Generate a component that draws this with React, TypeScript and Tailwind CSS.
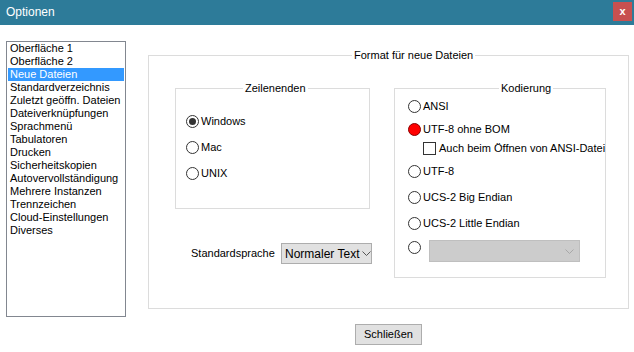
import React from "react";

const items = [
  "Oberfläche 1",
  "Oberfläche 2",
  "Neue Dateien",
  "Standardverzeichnis",
  "Zuletzt geöffn. Dateien",
  "Dateiverknüpfungen",
  "Sprachmenü",
  "Tabulatoren",
  "Drucken",
  "Sicherheitskopien",
  "Autovervollständigung",
  "Mehrere Instanzen",
  "Trennzeichen",
  "Cloud-Einstellungen",
  "Diverses",
];

const Radio = ({ checked = false, red = false }: { checked?: boolean; red?: boolean }) => {
  if (red) {
    return (
      <span className="flex h-[13px] w-[13px] shrink-0 rounded-full border border-[#8a0000] bg-[#ff0000]" />
    );
  }
  return (
    <span className="flex h-[13px] w-[13px] shrink-0 items-center justify-center rounded-full border border-[#333333] bg-white">
      {checked && <span className="h-[7px] w-[7px] rounded-full bg-[#333333]" />}
    </span>
  );
};

const RadioRow = ({ label, checked, red }: { label: string; checked?: boolean; red?: boolean }) => (
  <div className="flex h-[13px] items-center gap-[2px]">
    <Radio checked={checked} red={red} />
    <span className="leading-[13px]">{label}</span>
  </div>
);

const Chevron = ({ color }: { color: string }) => (
  <svg width="9" height="5" viewBox="0 0 9 5" className="shrink-0">
    <path d="M0.5 0.5 L4.5 4.5 L8.5 0.5" fill="none" stroke={color} strokeWidth="1" />
  </svg>
);

const GroupBox = ({
  title,
  titleLeft,
  className,
  children,
}: {
  title: string;
  titleLeft: string;
  className: string;
  children?: React.ReactNode;
}) => (
  <div className={`relative shrink-0 border border-[#dcdcdc] ${className}`}>
    <span className={`absolute -top-[7px] bg-white px-[2px] leading-[13px] ${titleLeft}`}>{title}</span>
    {children}
  </div>
);

export default function App() {
  return (
    <div
      className="flex h-[352px] w-[634px] flex-col bg-white text-[11px] text-black"
      style={{ fontFamily: '"Liberation Sans", Arial, sans-serif' }}
    >
      <div className="flex h-[25px] shrink-0 items-start justify-between bg-[#2d7b99] pl-[6px] pr-[2px]">
        <span className="mt-[5px] text-[12px] leading-[14px] text-white">Optionen</span>
        <button className="mt-[2px] flex h-[19px] w-[19px] items-center justify-center bg-[#c75050] text-[11px] font-bold leading-none text-white">
          x
        </button>
      </div>

      <div className="flex items-start pl-[6px] pt-[16px]">
        <div className="h-[276px] w-[120px] shrink-0 border border-[#828790] px-[1px]">
          {items.map((it) => (
            <div
              key={it}
              className={`h-[13px] whitespace-nowrap pl-[2px] leading-[13px] ${
                it === "Neue Dateien" ? "bg-[#3399ff] text-white" : ""
              }`}
            >
              {it}
            </div>
          ))}
        </div>

        <div className="ml-[22px] mt-[14px] flex flex-col items-center">
          <GroupBox title="Format für neue Dateien" titleLeft="left-[203px]" className="h-[254px] w-[481px]">
            <div className="flex items-start pl-[26px] pt-[32px]">
              <div className="flex flex-col">
                <GroupBox title="Zeilenenden" titleLeft="left-[67px]" className="h-[121px] w-[195px]">
                  <div className="flex flex-col gap-[13px] pl-[10px] pt-[26px]">
                    <RadioRow label="Windows" checked />
                    <RadioRow label="Mac" />
                    <RadioRow label="UNIX" />
                  </div>
                </GroupBox>
                <div className="mt-[34px] flex items-center pl-[16px]">
                  <span className="w-[90px]">Standardsprache</span>
                  <div className="flex h-[21px] w-[91px] items-center justify-between overflow-hidden border border-[#adadad] bg-[#e1e1e1] pl-[3px] pr-[5px]">
                    <span className="whitespace-nowrap text-[12px]">Normaler Text</span>
                    <span className="ml-[1px] flex h-full items-center bg-[#e1e1e1] pl-[2px]">
                      <Chevron color="#555555" />
                    </span>
                  </div>
                </div>
              </div>

              <GroupBox title="Kodierung" titleLeft="left-[104px]" className="ml-[22px] h-[190px] w-[212px]">
                <div className="flex flex-col pl-[13px] pt-[11px]">
                  <RadioRow label="ANSI" />
                  <div className="mt-[10px]">
                    <RadioRow label="UTF-8 ohne BOM" red />
                  </div>
                  <div className="mt-[6px] flex h-[13px] items-center gap-[3px] pl-[15px]">
                    <span className="h-[13px] w-[13px] shrink-0 border border-[#333333] bg-white" />
                    <span className="whitespace-nowrap leading-[13px]">Auch beim Öffnen von ANSI-Datei</span>
                  </div>
                  <div className="mt-[10px]">
                    <RadioRow label="UTF-8" />
                  </div>
                  <div className="mt-[13px]">
                    <RadioRow label="UCS-2 Big Endian" />
                  </div>
                  <div className="mt-[13px]">
                    <RadioRow label="UCS-2 Little Endian" />
                  </div>
                  <div className="mt-[10px] flex items-start gap-[8px]">
                    <span className="mt-[1px]">
                      <Radio />
                    </span>
                    <div className="flex h-[22px] w-[151px] items-center justify-end border border-[#bfbfbf] bg-[#cccccc] pr-[5px]">
                      <Chevron color="#a8a8a8" />
                    </div>
                  </div>
                </div>
              </GroupBox>
            </div>
          </GroupBox>

          <button className="mt-[15px] h-[21px] w-[67px] border border-[#adadad] bg-[#e1e1e1] text-[11px] leading-none">
            Schließen
          </button>
        </div>
      </div>
    </div>
  );
}
